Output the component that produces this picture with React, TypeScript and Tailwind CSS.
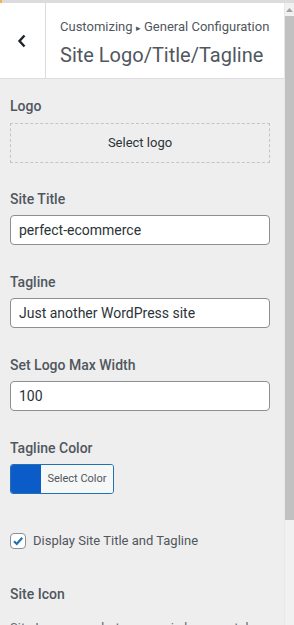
import React from 'react';

const font = { fontFamily: 'Roboto, "Noto Sans", sans-serif' };

const Label = ({ children }: { children: React.ReactNode }) => (
  <div className="text-[14px] font-medium leading-5 text-[#50575e]">{children}</div>
);

const TextField = ({ value }: { value: string }) => (
  <div className="mt-[6px] flex h-[30px] items-center rounded-[4px] border border-[#8c8f94] bg-white px-[8px] text-[14px] text-[#2c3338]">
    {value}
  </div>
);

const App = () => {
  return (
    <div className="flex h-[625px] w-[294px] flex-col overflow-hidden bg-[#eeeeee]" style={font}>
      {/* top strip */}
      <div className="flex h-[3px] shrink-0 bg-[#dcdcde]">
        <div className="w-[2px] bg-[#f0b849]" />
      </div>

      <div className="flex min-h-0 flex-1">
        <div className="flex w-[284px] flex-col">
          {/* header */}
          <div className="flex h-[76px] shrink-0 border-b border-[#dcdcde] bg-white">
            <div className="flex w-[46px] items-center justify-center border-r border-[#dcdcde] pr-[2px]">
              <svg width="10" height="14" viewBox="0 0 10 14" fill="none">
                <path d="M7.5 1.5 L2.5 7 L7.5 12.5" stroke="#1d2327" strokeWidth="2.4" />
              </svg>
            </div>
            <div className="flex flex-col pl-[14px] pt-[14px]">
              <div className="text-[13px] leading-5 text-[#50575e]">
                Customizing <span className="text-[9px]">▸</span> General Configuration
              </div>
              <div className="mt-[3px] text-[20px] leading-7 text-[#50575e]">Site Logo/Title/Tagline</div>
            </div>
          </div>

          {/* body */}
          <div className="flex flex-col pl-[10px] pr-[14px] pt-[17px]">
            <Label>Logo</Label>
            <div className="mt-[7px] flex h-[40px] items-center justify-center border border-dashed border-[#c3c4c7] text-[13px] text-[#2c3338]">
              Select logo
            </div>

            <div className="mt-[26px]">
              <Label>Site Title</Label>
            </div>
            <TextField value="perfect-ecommerce" />

            <div className="mt-[27px]">
              <Label>Tagline</Label>
            </div>
            <TextField value="Just another WordPress site" />

            <div className="mt-[27px]">
              <Label>Set Logo Max Width</Label>
            </div>
            <TextField value="100" />

            <div className="mt-[27px]">
              <Label>Tagline Color</Label>
            </div>
            <div className="mt-[6px] flex h-[30px] w-[104px] overflow-hidden rounded-[3px] border border-[#2271b1]">
              <div className="w-[30px] bg-[#0b5cc9]" />
              <div className="flex flex-1 items-center justify-center bg-[#f6f7f7] text-[11px] text-[#50575e]">
                Select Color
              </div>
            </div>

            <div className="mt-[37px] flex items-center gap-[7px]">
              <div className="flex h-[16px] w-[16px] items-center justify-center rounded-[4px] border border-[#8c8f94] bg-white">
                <svg width="12" height="12" viewBox="0 0 12 12" fill="none">
                  <path d="M2 6.2 L4.8 9 L10.2 2.8" stroke="#2271b1" strokeWidth="2.2" />
                </svg>
              </div>
              <div className="text-[13px] text-[#50575e]">Display Site Title and Tagline</div>
            </div>

            <div className="mt-[33px]">
              <Label>Site Icon</Label>
            </div>
            <div className="mt-[14px] whitespace-nowrap text-[13px] text-[#646970]">
              Site Icons are what you see in browser tabs
            </div>
          </div>
        </div>

        {/* scrollbar */}
        <div className="flex w-[10px] flex-col border-l border-[#e8e8e8] bg-[#f1f1f1]">
          <div className="flex h-[13px] items-center justify-center">
            <svg width="7" height="4" viewBox="0 0 7 4">
              <path d="M0 4 L3.5 0 L7 4 Z" fill="#a3a3a3" />
            </svg>
          </div>
          <div className="h-[504px] bg-[#c1c1c1]" />
        </div>
      </div>
    </div>
  );
};

export default App;
